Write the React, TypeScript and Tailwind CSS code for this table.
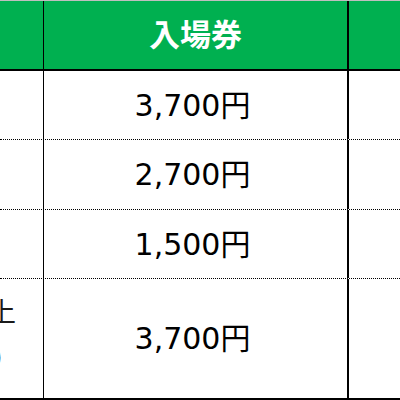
import React from "react";

const num = { fontFamily: '"DejaVu Sans", "Noto Sans CJK JP", sans-serif' };
const jp = { fontFamily: '"Noto Sans CJK JP", "DejaVu Sans", sans-serif' };

const rows = [
  { price: "3,700円", h: "h-[69px]" },
  { price: "2,700円", h: "h-[70px]" },
  { price: "1,500円", h: "h-[69px]" },
];

export default function App() {
  return (
    <div className="w-[400px] h-[400px] overflow-hidden bg-white text-black">
      {/* header */}
      <div className="flex h-[71px] border-t border-[#bfbfbf] border-b-2 border-b-black bg-[#00b050]">
        <div className="w-[44px] shrink-0 border-r border-black" />
        <div
          className="w-[305px] shrink-0 border-r-2 border-black flex items-center justify-center pb-[4px] text-white font-bold text-[31px]"
          style={jp}
        >
          入場券
        </div>
        <div className="flex-1" />
      </div>

      {rows.map((r) => (
        <div
          key={r.price}
          className={`flex ${r.h} border-b border-dotted border-black`}
        >
          <div className="w-[44px] shrink-0 border-r border-black" />
          <div
            className="w-[305px] shrink-0 border-r-2 border-black flex items-center justify-center pr-[6px] text-[30px]"
            style={num}
          >
            {r.price}
          </div>
          <div className="flex-1" />
        </div>
      ))}

      {/* last row */}
      <div className="flex h-[121px] border-b-2 border-black">
        <div
          className="w-[44px] shrink-0 border-r border-black overflow-hidden flex flex-col items-end justify-center pr-[27px] pb-[10px] text-[27px] leading-[46px] whitespace-nowrap text-[#1a1a1a]"
          style={jp}
        >
          <div>65歳以上</div>
          <div className="mr-[-3px]">（要証明）</div>
        </div>
        <div
          className="w-[305px] shrink-0 border-r-2 border-black flex items-center justify-center pr-[6px] text-[30px]"
          style={num}
        >
          3,700円
        </div>
        <div className="flex-1" />
      </div>
    </div>
  );
}
